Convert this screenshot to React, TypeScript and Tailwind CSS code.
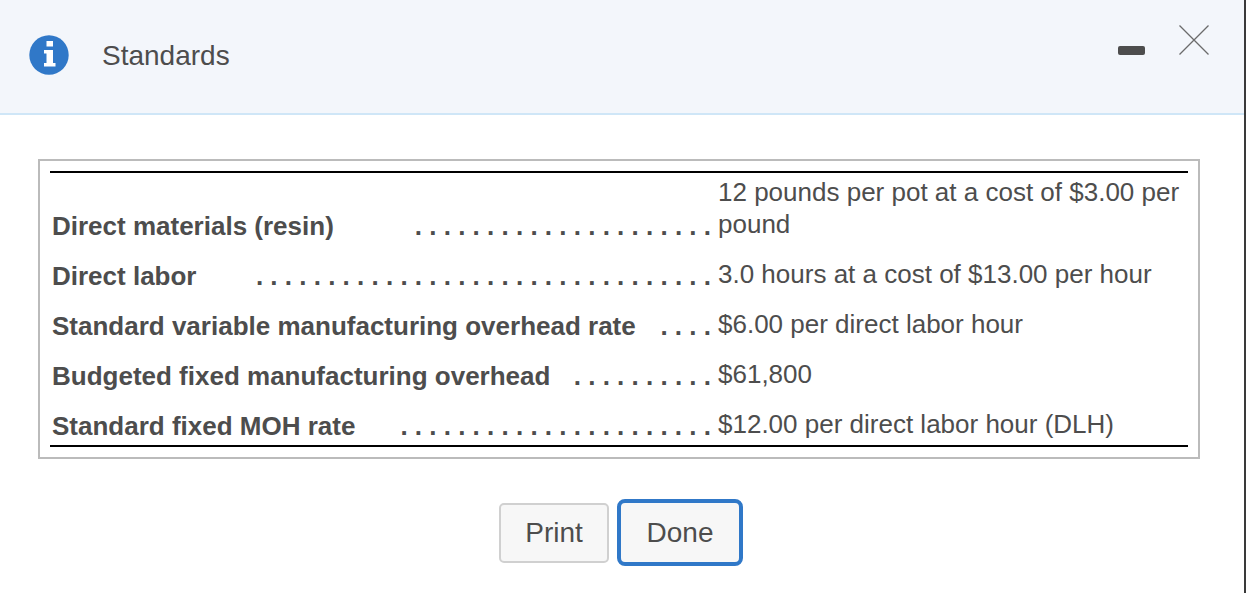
const rows = [
  { label: "Direct materials (resin)", dots: 21, value: "12 pounds per pot at a cost of $3.00 per pound" },
  { label: "Direct labor", dots: 32, value: "3.0 hours at a cost of $13.00 per hour" },
  { label: "Standard variable manufacturing overhead rate", dots: 4, value: "$6.00 per direct labor hour" },
  { label: "Budgeted fixed manufacturing overhead", dots: 10, value: "$61,800" },
  { label: "Standard fixed MOH rate", dots: 22, value: "$12.00 per direct labor hour (DLH)" },
];

export default function App() {
  return (
    <div className="h-[593px] w-[1246px] overflow-hidden bg-white font-['Liberation_Sans',Arial,sans-serif] text-[#4d4d4d]">
      <div className="h-full w-full border-r-2 border-[#3a3a3a]">
        <header className="flex h-[115px] justify-between border-b-2 border-[#cfe6f7] bg-[#f3f6fb] pl-[29px] pr-[35px]">
          <div className="flex items-center gap-[33px] pb-[4px]">
            <svg width="40" height="40" viewBox="0 0 40 40">
              <circle cx="20" cy="20" r="19.7" fill="#3078c8" />
              <path d="M17.5 6H24v5.5h-6.5zM15 15h9v13h2.5v3.5H15V28h2.5v-9.5H15z" fill="#fff" />
            </svg>
            <span className="mt-[2px] text-[28px]">Standards</span>
          </div>
          <div className="flex items-start gap-[34px] pt-[25px]">
            <div className="mt-[21px] h-[9px] w-[27px] rounded-[2px] bg-[#4d4d4d]" />
            <svg width="30" height="30" viewBox="0 0 30 30">
              <path d="M0.5 0.5l29 29M29.5 0.5l-29 29" stroke="#6b6b6b" strokeWidth="1.3" fill="none" />
            </svg>
          </div>
        </header>

        <section className="mx-[38px] mt-[44px] h-[300px] w-[1162px] border-2 border-[#bbbbbb] px-[10px] pt-[10px]">
          <div className="h-[276px] border-y-2 border-black">
            {rows.map((row, i) => (
              <div key={row.label} className={`flex items-end ${i === 0 ? "h-[68px]" : "mt-[18px] h-[32px]"}`}>
                <div className="mb-[-1px] flex w-[668px] items-end justify-between pl-[2px] pr-[7px]">
                  <span className="whitespace-nowrap text-[26px] font-bold leading-[32px]">{row.label}</span>
                  <span className="whitespace-pre text-[26px] font-bold leading-[32px]">{". ".repeat(row.dots).trimEnd()}</span>
                </div>
                <div className="w-[470px] pb-[1px] text-[26px] leading-[32px]">{row.value}</div>
              </div>
            ))}
          </div>
        </section>

        <div className="mt-[40px] flex justify-center gap-[8px] pr-[2px]">
          <button className="mt-[4px] h-[60px] w-[110px] rounded-[5px] border-2 border-[#d0d0d0] bg-[#f7f7f7] text-[28px]">Print</button>
          <button className="h-[67px] w-[126px] rounded-[8px] border-[4px] border-[#3078c8] bg-[#f7f7f7] text-[28px]">Done</button>
        </div>
      </div>
    </div>
  );
}
